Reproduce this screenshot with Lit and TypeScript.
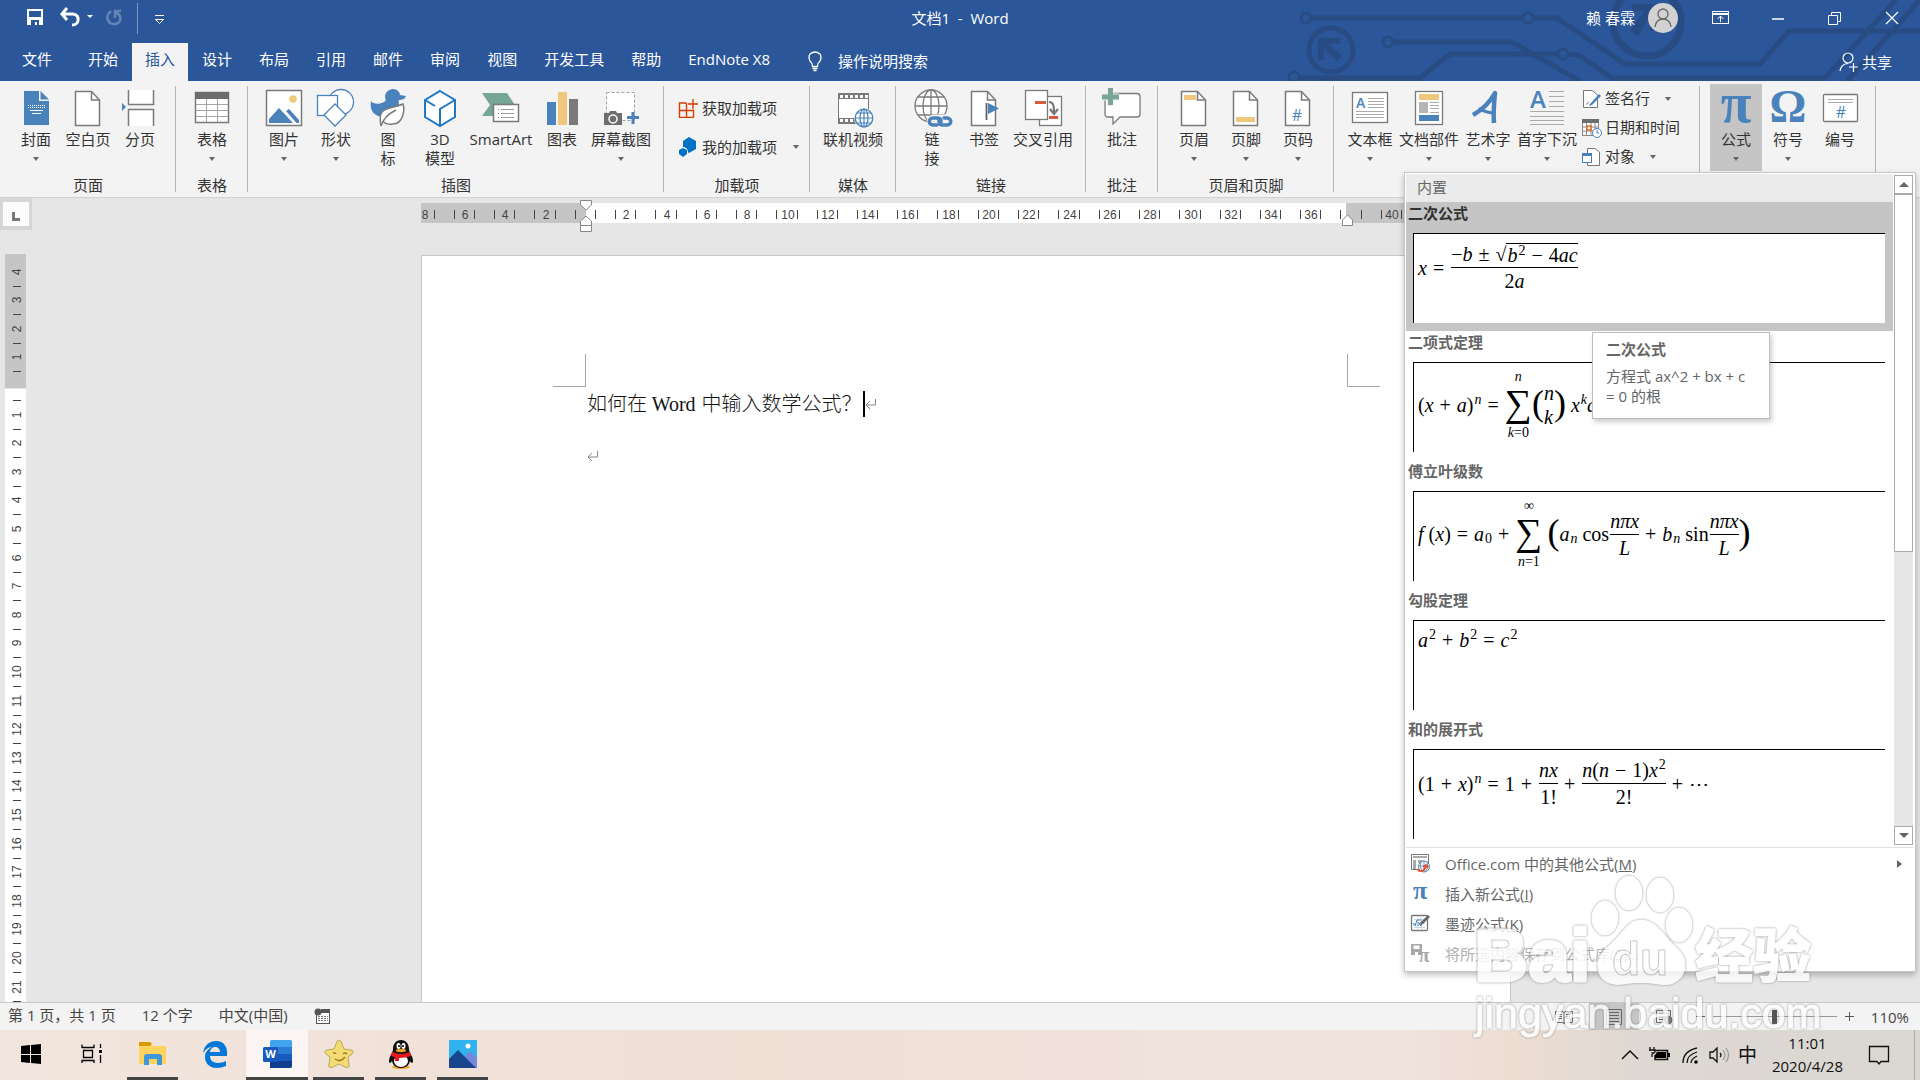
import { LitElement, html, svg, css, nothing, TemplateResult } from "lit";
import { customElement, state } from "lit/decorators.js";
import { classMap } from "lit/directives/class-map.js";

const BLUE = "#4a82bb";
const GREY = "#7a7a7a";

/* A page outline with a folded corner, shared by several ribbon icons. */
const sheet = svg`<path d="M7.500 3.500H23.500L31.500 12V37.500H7.500Z" fill="#fff" stroke="${GREY}" stroke-width="1.500"/><path d="M23.500 3.500V12H31.500" fill="none" stroke="${GREY}" stroke-width="1.500"/>`;

const big: Record<string, unknown> = {
  cover: svg`<path d="M8 3H23V13H33V37H8Z" fill="${BLUE}"/><path d="M24.500 3L33 11.500H24.500Z" fill="${BLUE}"/><path d="M12 17.500H29M12 19.500H29" stroke="#fff" stroke-dasharray="1 1"/><path d="M14 22.500H27M16 25.500H25" stroke="#fff"/>`,
  blank: sheet,
  break: svg`<path d="M8.500 2V16.500H33.500V2M8.500 38V21.500H33.500V38" fill="#fff" stroke="${GREY}" stroke-width="1.500"/><path d="M2 15L6 19L2 23Z" fill="${BLUE}"/>`,
  table: svg`<rect x="3.500" y="4.500" width="33" height="30" fill="#fff" stroke="${GREY}" stroke-width="1.500"/><rect x="3" y="4" width="34" height="7" fill="#6d6d6d"/><path d="M4 16.500H36M4 22.500H36M4 28.500H36M14.500 11V34M25.500 11V34" stroke="#a5a5a5"/>`,
  picture: svg`<rect x="2.500" y="2.500" width="35" height="35" fill="#fff" stroke="${GREY}" stroke-width="1.500"/><circle cx="29" cy="11" r="3.800" fill="#efc77d"/><path d="M5 35V31L15 20L29 35Z" fill="${BLUE}"/><path d="M22 23L25 21L35 32V35H32.500Z" fill="${BLUE}"/>`,
  shapes: svg`<circle cx="25" cy="14" r="12.500" fill="#fff" stroke="${BLUE}" stroke-width="1.300"/><rect x="1.500" y="7.500" width="20" height="20" fill="#fff" stroke="${BLUE}" stroke-width="1.300"/><path d="M19 16L30 27L19 38L8 27Z" fill="#fff" stroke="${BLUE}" stroke-width="1.300"/>`,
  icons: svg`<path d="M3 13C5 16 11 17 16 14C19 13 17 10 17 8C18 3 22 1 25 1C29 1 32 4 32 7L38 8C37 11 34 12 31 12C30 14 32 16 30 20C28 26 22 29 16 29C8 29 1 24 3 13Z" fill="${BLUE}"/><path d="M13 38C12 33 11 28 14 24C18 19 26 20 35 16C37 22 35 36 25 36C20 37 16 35 15 33" fill="#fff" stroke="${GREY}" stroke-width="1.500"/><path d="M13 38C15 31 20 26 28 22" fill="none" stroke="${GREY}" stroke-width="1.500"/>`,
  cube: svg`<path d="M20 3L35 12V29L20 38L5 29V12Z" fill="#fff" stroke="#1e78c2" stroke-width="2"/><path d="M5 12L15 18M20 37V21L35 12" fill="none" stroke="#1e78c2" stroke-width="2"/>`,
  smartart: svg`<path d="M1 5H26L34 17L26 28H1L9 17Z" fill="#77a696"/><rect x="12.500" y="16.500" width="25" height="17" fill="#fff" stroke="${GREY}" stroke-width="1.500"/><path d="M20 21.500H33M20 25.500H33M20 29.500H33" stroke="#9b9b9b"/><path d="M17 21.500H18M17 25.500H18M17 29.500H18" stroke="${GREY}"/>`,
  chart: svg`<rect x="5" y="14" width="9" height="23" fill="${BLUE}"/><rect x="16" y="4" width="9" height="33" fill="#efc77d"/><rect x="27" y="11" width="9" height="26" fill="${GREY}"/>`,
  screenshot: svg`<rect x="5.500" y="4.500" width="28" height="28" fill="#fff" stroke="#a0a0a0" stroke-dasharray="3 2"/><path d="M3 25H8L9 23H15L16 25H21V37H3Z" fill="#6d6d6d"/><circle cx="12" cy="31" r="4" fill="#6d6d6d" stroke="#fff" stroke-width="1.500"/><path d="M26 29.500H38M32 24V36" stroke="${BLUE}" stroke-width="3"/>`,
  video: svg`<rect x="5.500" y="5.500" width="30" height="30" fill="#fff" stroke="${GREY}"/><path d="M5 6H36V11H5ZM5 30H22V35H5Z" fill="${GREY}"/><path d="M7 8.500H36M7 32.500H20" stroke="#fff" stroke-width="3" stroke-dasharray="3 2"/><circle cx="31" cy="30" r="10" fill="#f3f3f3"/><circle cx="31" cy="30" r="8.800" fill="#fff" stroke="${BLUE}" stroke-width="1.300"/><ellipse cx="31" cy="30" rx="4" ry="8.800" fill="none" stroke="${BLUE}" stroke-width="1.300"/><path d="M31 21V39M22 30H40M24 25H38M24 35H38" stroke="${BLUE}" stroke-width="1.200"/>`,
  link: svg`<circle cx="19" cy="18" r="16" fill="#fff" stroke="${GREY}" stroke-width="1.300"/><ellipse cx="19" cy="18" rx="8" ry="16" fill="none" stroke="${GREY}" stroke-width="1.300"/><path d="M19 2V34M3 18H35M6 9H32M6 27H32" stroke="${GREY}" stroke-width="1.300"/><g fill="none" stroke="#f3f3f3" stroke-width="7"><rect x="18" y="30" width="13" height="8" rx="4"/><rect x="26" y="30" width="13" height="8" rx="4"/></g><g fill="none" stroke="${BLUE}" stroke-width="3.500" stroke-linecap="round"><path d="M25 37H21C16 37 16 30 21 30H25C29 30 30 34 28 36"/><path d="M32 30H35C40 30 40 37 35 37H31C27 37 26 33 28 31"/></g>`,
  bookmark: svg`${sheet}<path d="M22.500 15V32" stroke="#5f5f5f" stroke-width="1.800"/><path d="M24 15L35 20.500L24 26Z" fill="${BLUE}"/>`,
  crossref: svg`<rect x="16.500" y="8.500" width="22" height="29" fill="#fff" stroke="${GREY}" stroke-width="1.300"/><rect x="2.500" y="2.500" width="22" height="29" fill="#fff" stroke="${GREY}" stroke-width="1.300"/><path d="M12 14.500H23M26 29.500H35" stroke="#d65b3c" stroke-width="3"/><path d="M26 14C30 14 31 17 31 24M27 21L31 26L35 21" fill="none" stroke="#777" stroke-width="2.200"/>`,
  comment: svg`<path d="M5 5.500H35Q38 5.500 38 8.500V26Q38 29 35 29H18L11 36V29H6Q3 29 3 26V8.500Z" fill="#fff" stroke="${GREY}" stroke-width="1.300"/><path d="M-1 9H17M8 0V18" stroke="#f3f3f3" stroke-width="7"/><path d="M0 9H17M8.500 0V17" stroke="#77a696" stroke-width="5"/>`,
  header: svg`${sheet}<rect x="10" y="7" width="12" height="5" fill="#efc77d"/>`,
  footer: svg`${sheet}<rect x="10" y="29" width="19" height="5" fill="#efc77d"/>`,
  pageno: svg`${sheet}<text x="19" y="33" class="hash">#</text>`,
  textbox: svg`<rect x="2.500" y="4.500" width="35" height="30" fill="#fff" stroke="${GREY}" stroke-width="1.300"/><text x="6" y="20" class="lettr" font-size="14">A</text><path d="M18 10.500H34M18 13.500H34M18 16.500H34M18 19.500H34M6 23.500H34M6 26.500H34M6 29.500H34" stroke="#aaa"/>`,
  parts: svg`<rect x="6.500" y="3.500" width="27" height="33" fill="#fff" stroke="${GREY}" stroke-width="1.300"/><rect x="10" y="6" width="20" height="6" fill="#efc77d"/><rect x="10" y="14" width="9" height="11" fill="#b5b5b5"/><path d="M21 14.500H30M21 17.500H30M21 20.500H30M21 24.500H30" stroke="#aaa"/><rect x="10" y="27" width="20" height="6" fill="${BLUE}"/>`,
  wordart: svg`<g fill="none" stroke="${BLUE}" stroke-width="4.500"><path d="M5 27C14 22 22 14 27 5C26 15 25 25 26 35" stroke-linejoin="round"/><path d="M11 20C16 24 21 25 28 25" stroke-width="3"/></g>`,
  dropcap: svg`<text x="3" y="20" class="lettr" font-size="24">A</text><path d="M22 3.500H37M22 8.500H37M22 13.500H37M22 18.500H37M3 23.500H37M3 28.500H37M3 32.500H37M3 36.500H37" stroke="#aaa"/>`,
  pi: svg`<text x="20" y="34" class="sym" font-size="56">π</text>`,
  omega: svg`<text x="20" y="34" class="sym" font-size="46">Ω</text>`,
  number: svg`<rect x="3.500" y="6.500" width="34" height="27" rx="1" fill="#fff" stroke="${GREY}" stroke-width="1.300"/><path d="M8 11.500H33M8 14.500H33" stroke="#aaa"/><text x="21" y="30" class="hash">#</text>`,
};

interface Cmd { icon: string; label: string; second?: string; wide?: boolean; wider?: boolean; caret?: boolean; on?: boolean }
interface Group { name: string; cmds: Cmd[]; kind?: "addins" | "text" }

const TABS = ["文件", "开始", "插入", "设计", "布局", "引用", "邮件", "审阅", "视图", "开发工具", "帮助", "EndNote X8"];

const GROUPS: Group[] = [
  { name: "页面", cmds: [{ icon: "cover", label: "封面", caret: true }, { icon: "blank", label: "空白页" }, { icon: "break", label: "分页" }] },
  { name: "表格", cmds: [{ icon: "table", label: "表格", caret: true }] },
  { name: "插图", cmds: [
    { icon: "picture", label: "图片", caret: true }, { icon: "shapes", label: "形状", caret: true },
    { icon: "icons", label: "图", second: "标" }, { icon: "cube", label: "3D", second: "模型" },
    { icon: "smartart", label: "SmartArt", wider: true }, { icon: "chart", label: "图表" },
    { icon: "screenshot", label: "屏幕截图", wide: true, caret: true }] },
  { name: "加载项", cmds: [], kind: "addins" },
  { name: "媒体", cmds: [{ icon: "video", label: "联机视频", wide: true }] },
  { name: "链接", cmds: [{ icon: "link", label: "链", second: "接" }, { icon: "bookmark", label: "书签" }, { icon: "crossref", label: "交叉引用", wide: true }] },
  { name: "批注", cmds: [{ icon: "comment", label: "批注" }] },
  { name: "页眉和页脚", cmds: [{ icon: "header", label: "页眉", caret: true }, { icon: "footer", label: "页脚", caret: true }, { icon: "pageno", label: "页码", caret: true }] },
  { name: "文本", kind: "text", cmds: [
    { icon: "textbox", label: "文本框", caret: true }, { icon: "parts", label: "文档部件", wide: true, caret: true },
    { icon: "wordart", label: "艺术字", caret: true }, { icon: "dropcap", label: "首字下沉", wide: true, caret: true }] },
  { name: "符号", cmds: [{ icon: "pi", label: "公式", caret: true, on: true }, { icon: "omega", label: "符号", caret: true }, { icon: "number", label: "编号" }] },
];

/* ---------- ribbon ---------- */
@customElement("word-ribbon")
class WordRibbon extends LitElement {
  static styles = css`
    :host { display: block; background: #f3f3f3; border-bottom: 1px solid #d2d2d2; }
    button { font: inherit; color: inherit; background: none; border: 0; padding: 0; }
    .bar { display: flex; height: 112px; padding: 3px 0 1px; font-size: 15px; line-height: 19px; color: #333; }
    .group { display: flex; flex-direction: column; padding: 0 10px; position: relative; }
    .group::after { content: ""; position: absolute; right: 0; top: 2px; bottom: 4px; width: 1px; background: #b5b5b5; }
    .cmds { display: flex; height: 87px; }
    .name { margin-top: 5px; text-align: center; white-space: nowrap; }
    .cmd { width: 52px; display: flex; flex-direction: column; align-items: center; padding-top: 4px; white-space: nowrap; }
    .cmd.wide { width: 66px; }
    .cmd.wider { width: 70px; }
    .cmd.on { background: #c5c5c5; }
    .cmd svg { flex: none; width: 40px; height: 40px; margin-bottom: 2px; overflow: visible; }
    .caret { display: inline-block; width: 0; height: 0; border: 3px solid transparent; border-top: 4px solid #666; border-bottom: 0; }
    .second { height: 19px; display: flex; align-items: center; }
    .side { display: flex; flex-direction: column; }
    .addins { width: 126px; padding-top: 6px; gap: 3px; }
    .addins .row { height: 36px; padding-left: 4px; gap: 4px; }
    .textside { width: 110px; }
    .row { display: flex; align-items: center; height: 29px; gap: 3px; padding-left: 2px; white-space: nowrap; }
    .row .caret { margin-left: 12px; }
    .row svg { flex: none; width: 20px; height: 20px; }
    .hash { font: 16px "Open Sans", sans-serif; fill: #4a82bb; text-anchor: middle; }
    .lettr { font-family: "Open Sans", sans-serif; font-weight: 600; fill: #4a82bb; }
    .sym { font-family: "Liberation Serif", serif; font-weight: bold; fill: #4a82bb; text-anchor: middle; }
  `;

  private command(c: Cmd) {
    return html`<button class=${classMap({ cmd: true, wide: !!c.wide, wider: !!c.wider, on: !!c.on })}>
      <svg viewBox="0 0 40 40">${big[c.icon]}</svg>
      <span>${c.label}</span>
      <span class="second">${c.second ?? (c.caret ? html`<i class="caret"></i>` : nothing)}</span>
    </button>`;
  }

  private addins() {
    return html`<div class="side addins">
      <button class="row"><svg viewBox="0 0 20 20"><path d="M8.500 5H1.500V19.500H15.500V12.500H1.500M8.500 5V19.500M15 1V11M10 6H20" fill="none" stroke="#d83b01" stroke-width="1.400"/></svg><span>获取加载项</span></button>
      <button class="row"><svg viewBox="0 0 20 20"><path d="M11 0L18 4V12L11 16L5 12V4Z" fill="#0072c6"/><circle cx="5" cy="15" r="5" fill="#f3f3f3"/><path d="M5 11L9 13V17L5 20L1 17V13Z" fill="#0072c6"/></svg><span>我的加载项</span><i class="caret"></i></button>
    </div>`;
  }

  private textSide() {
    return html`<div class="side textside">
      <button class="row"><svg viewBox="0 0 20 20"><path d="M1.500 1.500H10L15.500 6V18.500H1.500Z" fill="#fff" stroke="#777"/><path d="M8 15L17 5L19 7L10 16L7 17Z" fill="#4a82bb"/><path d="M4 15.500L7 13" stroke="#777"/></svg><span>签名行</span><i class="caret"></i></button>
      <button class="row"><svg viewBox="0 0 20 20"><rect x="0.500" y="1.500" width="16" height="16" fill="#fff" stroke="#888"/><rect y="1" width="17" height="4" fill="#6d6d6d"/><path d="M1 9H16M1 13H16M4.500 5V17M9 5V17M13 5V17" stroke="#888"/><rect x="5" y="8" width="4" height="4" fill="#fff" stroke="#e06c1b" stroke-width="1.500"/><circle cx="15" cy="15" r="4.500" fill="#fff" stroke="#4a82bb"/><path d="M15 12V15H17" fill="none" stroke="#4a82bb"/></svg><span>日期和时间</span></button>
      <button class="row"><svg viewBox="0 0 20 20"><path d="M5.500 18.500V1.500H13L17.500 5V18.500Z" fill="#fff" stroke="#777"/><rect x="0.500" y="6.500" width="9" height="9" fill="#fff" stroke="#4a82bb"/><rect y="6" width="10" height="3" fill="#4a82bb"/></svg><span>对象</span><i class="caret"></i></button>
    </div>`;
  }

  render() {
    return html`<div class="bar">${GROUPS.map((g) => html`<div class="group">
      <div class="cmds">${g.cmds.map((c) => this.command(c))}${g.kind === "addins" ? this.addins() : g.kind === "text" ? this.textSide() : nothing}</div>
      <div class="name">${g.name}</div>
    </div>`)}</div>`;
  }
}

/* ---------- equations ---------- */
const v = (s: string) => html`<i>${s}</i>`;
const op = (s: string) => html`<span class="op">${s}</span>`;
const frac = (a: unknown, b: unknown) => html`<span class="frac"><span class="num">${a}</span><span class="den">${b}</span></span>`;
const sum = (top: unknown, bottom: unknown) => html`<span class="sum"><span class="lim">${top}</span><span class="sigma">∑</span><span class="lim">${bottom}</span></span>`;

const EQUATIONS: { name: string; body: TemplateResult }[] = [
  { name: "二次公式", body: html`${v("x")}${op("=")}${frac(html`<span>−${v("b")}</span>${op("±")}<span>√</span><span class="root">${v("b")}<sup>2</sup>${op("−")}4${v("ac")}</span>`, html`2${v("a")}`)}` },
  { name: "二项式定理", body: html`<span>(</span>${v("x")}${op("+")}${v("a")}<span>)</span><sup>${v("n")}</sup>${op("=")}${sum(v("n"), html`${v("k")}=0`)}<span class="tall">(</span><span class="stack">${v("n")}${v("k")}</span><span class="tall">)</span><span class="gap"></span>${v("x")}<sup>${v("k")}</sup>${v("a")}<sup>${v("n−k")}</sup>` },
  { name: "傅立叶级数", body: html`${v("f")}<span class="gap"></span><span>(</span>${v("x")}<span>)</span>${op("=")}${v("a")}<sub>0</sub>${op("+")}${sum("∞", html`${v("n")}=1`)}<span class="gap"></span><span class="tall">(</span>${v("a")}<sub>${v("n")}</sub><span class="gap"></span><span>cos</span>${frac(v("nπx"), v("L"))}${op("+")}${v("b")}<sub>${v("n")}</sub><span class="gap"></span><span>sin</span>${frac(v("nπx"), v("L"))}<span class="tall">)</span>` },
  { name: "勾股定理", body: html`${v("a")}<sup>2</sup>${op("+")}${v("b")}<sup>2</sup>${op("=")}${v("c")}<sup>2</sup>` },
  { name: "和的展开式", body: html`<span>(1</span>${op("+")}${v("x")}<span>)</span><sup>${v("n")}</sup>${op("=")}<span>1</span>${op("+")}${frac(v("nx"), "1!")}${op("+")}${frac(html`${v("n")}<span>(</span>${v("n")}${op("−")}1)${v("x")}<sup>2</sup>`, "2!")}${op("+")}<span>⋯</span>` },
];

@customElement("equation-gallery")
class EquationGallery extends LitElement {
  @state() private active = 0;

  static styles = css`
    :host { display: block; background: #fff; border: 1px solid #c6c6c6; box-shadow: 0 3px 6px rgba(0, 0, 0, 0.25); font-size: 15px; line-height: 20px; color: #666; padding: 1px; box-sizing: border-box; }
    button { font: inherit; color: inherit; background: none; border: 0; padding: 0; text-align: left; }
    .top { display: flex; }
    .list { flex: 1; min-width: 0; }
    .head { background: #ebebeb; height: 28px; line-height: 26px; padding-left: 11px; }
    .item { display: block; width: 100%; height: 129px; padding: 1px 8px 8px 7px; box-sizing: border-box; }
    .item.on { background: #c5c5c5; color: #333; }
    .title { display: block; height: 30px; font-weight: bold; margin-left: -5px; }
    .box { display: flex; align-items: flex-start; height: 90px; box-sizing: border-box; background: #fff; border-left: 1px solid #000; border-top: 1px solid #000; padding: 7px 0 0 4px; overflow: hidden; }
    .eq { display: flex; align-items: center; color: #000; font: 20px/24px "Liberation Serif", serif; white-space: nowrap; }
    .op { margin: 0 6px; }
    .gap { width: 5px; }
    .frac { display: flex; flex-direction: column; align-items: stretch; margin-left: 1px; }
    .num, .den { display: flex; justify-content: center; align-items: center; height: 26px; }
    .num { border-bottom: 1px solid #000; }
    .root { display: flex; border-top: 1px solid #000; height: 22px; line-height: 22px; padding-left: 1px; }
    sup, sub { font-size: 14px; line-height: 14px; vertical-align: baseline; margin-left: 1px; }
    sup { padding-bottom: 10px; }
    sub { padding-top: 10px; }
    .sum { display: flex; flex-direction: column; align-items: center; }
    .lim { font-size: 14px; line-height: 14px; height: 14px; }
    .sigma { font: 38px/38px "Liberation Serif", serif; height: 42px; }
    .tall { font-size: 36px; line-height: 40px; height: 44px; font-weight: normal; }
    .stack { display: flex; flex-direction: column; }
    .scroll { width: 21px; display: flex; flex-direction: column; padding: 1px 1px 2px; box-sizing: border-box; }
    .arrow { height: 19px; border: 1px solid #ababab; background: #fff; display: flex; align-items: center; justify-content: center; box-sizing: border-box; }
    .track { flex: 1; background: #e6e6e6; }
    .thumb { height: 358px; box-sizing: border-box; border: 1px solid #ababab; background: #fff; }
    .up, .down, .right { width: 0; height: 0; border: 5px solid transparent; }
    .up { border-bottom-color: #666; border-top: 0; }
    .down { border-top-color: #666; border-bottom: 0; }
    .right { border-left-color: #666; border-right: 0; margin: 0 12px 0 auto; border-left-width: 5px; border-top-width: 4px; border-bottom-width: 4px; }
    .menu { border-top: 1px solid #e1e1e1; padding: 1px 0; display: flex; flex-direction: column; }
    .entry { display: flex; align-items: center; height: 30px; padding-left: 5px; gap: 14px; }
    .entry svg { width: 20px; height: 20px; flex: none; overflow: visible; }
    .entry.off { color: #b0b0b0; }
    .pi { font: bold 26px "Liberation Serif", serif; fill: #4a82bb; text-anchor: middle; }
    .pi.small { font-size: 20px; fill: #a8a8a8; }
    .tip { position: absolute; left: 187px; top: 159px; width: 178px; height: 87px; box-sizing: border-box; background: #fff; border: 1px solid #bebebe; box-shadow: 2px 3px 5px rgba(0, 0, 0, 0.2); padding: 6px 10px 0 13px; }
    .tip b { display: block; margin-bottom: 7px; }
  `;

  render() {
    return html`
      <div class="top">
        <div class="list">
          <div class="head">内置</div>
          ${EQUATIONS.map((e, i) => html`<button class=${classMap({ item: true, on: i === this.active })} @click=${() => (this.active = i)}>
            <span class="title">${e.name}</span>
            <span class="box"><span class="eq">${e.body}</span></span>
          </button>`)}
        </div>
        <div class="scroll">
          <button class="arrow" aria-label="向上滚动"><i class="up"></i></button>
          <div class="track"><div class="thumb"></div></div>
          <button class="arrow" aria-label="向下滚动"><i class="down"></i></button>
        </div>
      </div>
      <div class="menu">
        <button class="entry"><svg viewBox="0 0 20 20"><path d="M0.500 0.500H17.500V15.500H0.500Z" fill="#fff" stroke="#777"/><path d="M2 3H16" stroke="#aaa" stroke-width="2"/><path d="M2 6H5V15H2ZM7 6H11V9H7Z" fill="#aaa"/><circle cx="13" cy="12.500" r="5.500" fill="#fff" stroke="#4a82bb"/><path d="M8 12H18M13 7V18M10 8Q8 13 11 17M16 8Q18 13 15 17" fill="none" stroke="#4a82bb" stroke-width="0.800"/><path d="M6 15C9 19 14 17 15 12M12 13L15 11L17 14" fill="none" stroke="#e8502a" stroke-width="1.700"/></svg><span>Office.com 中的其他公式(<u>M</u>)</span><i class="right"></i></button>
        <button class="entry"><svg viewBox="0 0 20 20"><text x="9" y="15" class="pi">π</text></svg><span>插入新公式(<u>I</u>)</span></button>
        <button class="entry"><svg viewBox="0 0 20 20"><rect x="0.500" y="1.500" width="16" height="15" rx="1" fill="#fff" stroke="#777" stroke-width="1.300"/><path d="M3 5.500H14M3 9.500H14M3 13.500H14M6.500 4V15M10.500 4V15" stroke="#c4d8ea"/><path d="M2 9L4 12L6 6H10M7 8L10 12M10 8L7 12" fill="none" stroke="#4a82bb"/><path d="M9 12L10 8L17 1L19 3L12 10Z" fill="#666"/></svg><span>墨迹公式(<u>K</u>)</span></button>
        <button class="entry off" disabled><svg viewBox="0 0 20 20"><path d="M0 0H11V11H7V8H4V11H0ZM2.500 1.500V5H8.500V1.500Z" fill="#a8a8a8" fill-rule="evenodd"/><text x="13" y="18" class="pi small">π</text></svg><span>将所选内容保存到公式库(<u>S</u>)...</span></button>
      </div>
      <div class="tip" role="tooltip"><b>二次公式</b>方程式 ax^2 + bx + c<br>= 0 的根</div>
    `;
  }
}

/* ---------- application shell ---------- */
const CM = 20.15;

const task: Record<string, unknown> = {
  开始: svg`<path d="M5 7L14 6V15H5ZM15 6L25 5V15H15ZM5 16H14V24L5 23ZM15 16H25V25L15 24Z" fill="#000"/>`,
  任务视图: svg`<path d="M5 5.500V9M17 5.500V9M5 8.500H17M6.500 11.500H15.500V18.500H6.500ZM5 24V21.500H17V24M23.500 5V9M23.500 16V24" fill="none" stroke="#000" stroke-width="1.300"/><rect x="22" y="11" width="3" height="3"/>`,
  文件资源管理器: svg`<path d="M1 4H12L14 7H28V25H1Z" fill="#ffd45e"/><path d="M1 3H12L14 5L12 7H1Z" fill="#d99a00"/><path d="M6 26V18Q6 15 9 15H21Q24 15 24 18V26H19V20H11V26Z" fill="#3f97dc"/>`,
  Edge: svg`<path d="M3 14C4 6 10 2 16 2C24 2 28 8 27 17H10C10 22 14 24 18 24C21 24 24 23 26 22V27C23 28 20 29 17 29C9 29 5 24 5 18C5 13 8 10 12 8C8 8 5 11 3 14ZM10 13H20C20 10 18 8 15 8C13 8 10 10 10 13Z" fill="#0078d7" fill-rule="evenodd"/>`,
  Word: svg`<rect x="8" y="1" width="22" height="28" rx="1.500" fill="#41a5ee"/><path d="M8 8H30V15H8Z" fill="#2b7cd3"/><path d="M8 15H30V22H8Z" fill="#185abd"/><path d="M8 22H30V27Q30 29 28 29H8Z" fill="#103f91"/><rect x="1" y="8" width="15" height="15" rx="1.500" fill="#185abd"/><text x="8.500" y="19" class="w">W</text>`,
  收藏: svg`<path d="M15 1Q17 1 18 5L20 10L27 11Q31 12 28 15L24 18L25 25Q26 30 21 28L15 25L9 28Q4 30 5 25L6 18L2 15Q-1 12 3 11L10 10L12 5Q13 1 15 1Z" fill="#f3dc72" stroke="#b9a760"/><path d="M9 14Q11 13 12 15M19 15Q21 13 23 15M11 20Q16 24 21 18" fill="none" stroke="#a87d28" stroke-width="1.500"/>`,
  QQ: svg`<ellipse cx="15" cy="28" rx="9" ry="2" fill="#f5a623"/><path d="M15 1C20 1 23 5 23 10C23 14 27 17 27 22C27 25 25 24 24 22C23 27 19 29 15 29C11 29 7 27 6 22C5 24 3 25 3 22C3 17 7 14 7 10C7 5 10 1 15 1Z" fill="#111"/><ellipse cx="15" cy="22" rx="7" ry="6" fill="#fff"/><ellipse cx="12.500" cy="7" rx="2" ry="3" fill="#fff"/><ellipse cx="17.500" cy="7" rx="2" ry="3" fill="#fff"/><circle cx="13" cy="7" r="1"/><circle cx="17" cy="7" r="1"/><ellipse cx="15" cy="11.500" rx="5" ry="1.700" fill="#f5a623"/><path d="M6 13Q15 17 24 13L25 17Q20 19 13 19V22H9V18L5 17Z" fill="#e8191c"/>`,
  照片: svg`<rect x="1" y="1" width="28" height="28" rx="1" fill="#2fb2ee"/><path d="M14 20L22 12L29 19V29H14Z" fill="#7587dd"/><path d="M1 20L10 11L28 29H1Z" fill="#18458c"/><circle cx="20" cy="7" r="2.500" fill="#fff"/>`,
};

@customElement("app-root")
class AppRoot extends LitElement {
  static styles = css`
    :host { display: flex; flex-direction: column; min-height: 100vh; position: relative; overflow: hidden; font-family: "Open Sans", "Noto Sans CJK SC", sans-serif; font-size: 15px; line-height: 20px; background: #e6e6e6; }
    button { font: inherit; color: inherit; background: none; border: 0; padding: 0; }
    header { background: #2b579a; color: #fff; position: relative; height: 81px; display: flex; flex-direction: column; }
    .circuit { position: absolute; right: 0; top: 0; width: 640px; height: 81px; }
    .titlebar, .tabs { position: relative; display: flex; align-items: center; }
    .titlebar { height: 36px; justify-content: space-between; }
    .quick, .window { flex: 1; display: flex; align-items: center; }
    .quick svg { height: 31px; width: 150px; margin-left: 24px; }
    .doc { white-space: pre; }
    .window { justify-content: flex-end; }
    .window .who { margin-right: 13px; }
    .window button { width: 57px; height: 36px; display: flex; align-items: center; justify-content: center; }
    .window .first { margin-left: 14px; }
    .window svg { width: 18px; height: 18px; }
    .window svg.avatar { width: 30px; height: 30px; }
    .tabs { height: 38px; margin-top: 7px; gap: 1px; }
    .tab { height: 38px; padding: 0 13px 6px; white-space: nowrap; }
    .tab:first-child { padding: 0 22px 6px; }
    .tab.on { background: #f3f3f3; color: #2b579a; }
    .tell { display: flex; align-items: center; gap: 15px; margin-left: 23px; padding-bottom: 2px; }
    .tell svg { width: 16px; height: 21px; }
    .share { display: flex; align-items: center; gap: 3px; margin: 0 28px 0 auto; }
    .share svg { width: 20px; height: 20px; }

    .work { flex: 1; display: flex; min-height: 0; }
    .leftbar { width: 30px; flex: none; }
    .corner { display: flex; align-items: center; justify-content: center; width: 26px; height: 24px; background: #fcfcfc; border: 3px solid #d6d6d6; border-width: 4px 3px 4px 3px; box-sizing: content-box; }
    .corner i { width: 5px; height: 6px; border-left: 3px solid #777; border-bottom: 3px solid #777; margin: 4px 0 0; }
    .vruler { display: block; width: 30px; height: 748px; margin-top: 24px; }
    .desk { flex: 1; display: flex; flex-direction: column; align-items: center; margin-right: 18px; }
    .hruler { display: block; width: 1090px; height: 57px; overflow: visible; }
    .page { position: relative; flex: 1; width: 1090px; box-sizing: border-box; background: #fff; border: 1px solid #c6c6c6; border-bottom: 0; padding: 132px 163px 0 165px; font-family: "Liberation Serif", "Noto Sans CJK SC", serif; font-weight: 300; font-size: 20px; line-height: 32px; color: #111; }
    .page p { margin: 0 0 20px; height: 32px; display: flex; align-items: center; white-space: pre; }
    .latin { font-weight: 400; margin: 0 1px 0 0; }
    .cursor { width: 2px; height: 26px; background: #000; margin-left: 1px; }
    .para { width: 12px; height: 12px; }
    .mark { position: absolute; top: 98px; width: 32px; height: 32px; border: 0 solid #a6a6a6; border-bottom-width: 1px; }
    .mark.l { left: 131px; border-right-width: 1px; }
    .mark.r { right: 130px; border-left-width: 1px; }
    .rt { font: 12px "Liberation Sans", sans-serif; fill: #444; text-anchor: middle; }

    .status { height: 27px; background: #f3f3f3; border-top: 1px solid #c8c8c8; display: flex; align-items: center; color: #444; padding: 0 11px 0 8px; gap: 26px; white-space: nowrap; line-height: 20px; }
    .status > span { padding-bottom: 4px; }
    .status svg { width: 18px; height: 18px; }
    .views { margin-left: auto; display: flex; align-items: center; height: 27px; }
    .views button { width: 50px; height: 27px; display: flex; align-items: center; justify-content: center; }
    .views .on { background: #c5c5c5; }
    .zoom { display: flex; align-items: center; gap: 7px; margin-left: -20px; font-size: 15px; }
    .zoom svg { width: 11px; height: 11px; display: block; }
    .zoom input { appearance: none; width: 124px; height: 20px; margin: 0; background: linear-gradient(#999, #999) center / 100% 1px no-repeat; }
    .zoom input::-webkit-slider-thumb { appearance: none; width: 5px; height: 14px; background: #555; }
    .pct { margin-left: 9px; }

    .taskbar { height: 50px; display: flex; background: linear-gradient(90deg, #f2e5dd 0, #efe0d6 40%, #f1e4df 72%, #ecddd2 79%, #ddd8d2 86%, #dad6d1); }
    .tasks { display: flex; }
    .task { width: 62px; height: 50px; display: flex; align-items: center; justify-content: center; box-sizing: border-box; border-bottom: 3px solid transparent; background-clip: padding-box; position: relative; }
    .task.slim { width: 61px; }
    .task svg { width: 30px; height: 30px; }
    .task.run::after { content: ""; position: absolute; left: 5px; right: 6px; bottom: -3px; height: 3px; background: #444; }
    .task.now { background-color: #faf5f2; }
    .task.now::after { left: 0; right: 0; }
    .w { font: bold 11px "Open Sans", sans-serif; fill: #fff; text-anchor: middle; }
    .tray { margin-left: auto; display: flex; align-items: center; color: #111; }
    .icons { width: 109px; height: 24px; margin-right: 8px; }
    .ime { font-size: 19px; }
    .clock { display: flex; flex-direction: column; align-items: center; margin-left: 15px; line-height: 23px; }
    .note { width: 22px; height: 22px; margin: 0 24px 0 25px; }
    .edge { width: 1px; align-self: stretch; background: #b0aba6; margin-right: 5px; }

    equation-gallery { position: absolute; right: 4px; top: 172px; width: 512px; }
    .watermark { position: absolute; right: 95px; top: 870px; width: 360px; height: 180px; pointer-events: none; opacity: 0.8; filter: drop-shadow(0 0 1px #777); }
    .watermark text { font-family: "Liberation Sans", "Noto Sans CJK SC", sans-serif; font-weight: bold; }
    .watermark .du { font-size: 46px; stroke: #bdbdbd; stroke-width: 1px; }
    .watermark .url { font-weight: normal; stroke-width: 1px; }
  `;

  private circuit() {
    return html`<svg class="circuit" viewBox="0 0 640 81"><g fill="none" stroke="#274b82" stroke-width="5">
      <circle cx="26" cy="18" r="5" stroke-width="3"/><circle cx="248" cy="18" r="5" stroke-width="3"/><path d="M32 18H242M254 18H277L345 64H480L509 31H640"/>
      <circle cx="108" cy="42" r="5" stroke-width="3"/><path d="M114 42H232L300 81"/>
      <circle cx="14" cy="77" r="5" stroke-width="3"/><path d="M20 78H140L170 54H277M289 54Q300 54 306 60L332 78H545L616 0M567 81L640 0"/><circle cx="283" cy="54" r="5" stroke-width="3"/>
      <circle cx="51" cy="50" r="22"/><circle cx="367" cy="22" r="34" stroke-width="7"/></g>
      <path d="M38 38H60V44H49L62 56L57 61L44 49V60H38ZM352 4H378V31H370V16L358 36L350 31L364 11H352Z" fill="#274b82"/></svg>`;
  }

  private hruler() {
    const zero = 165;
    const marks: unknown[] = [];
    for (let n = -8; n <= 40; n += 2) {
      const x = Math.round(zero + n * CM);
      if (n !== 0 && n !== 38) marks.push(svg`<text class="rt" x=${Math.max(x, 3)} y="21">${Math.abs(n)}</text>`);
      marks.push(svg`<path d="M${x + 9}.5 12V21M${x + 29}.5 12V21" stroke="#444"/>`);
    }
    return html`<svg class="hruler" viewBox="0 0 1090 57">
      <rect x="0" y="5" width="1090" height="20" fill="#c5c5c5"/><rect x="165" y="5" width="760" height="20" fill="#fff"/>
      ${marks}
      <path d="M159.500 2.500H170.500V7L165 12L159.500 7ZM159.500 31.500V23L165 18L170.500 23V33.500H159.500V27.500H170.500M921.500 27.500V22L926.500 17L931.500 22V27.500Z" fill="#fff" stroke="#888"/>
    </svg>`;
  }

  private vruler() {
    const step = 28.6;
    const zero = 132;
    const marks: unknown[] = [];
    for (let n = -4; n <= 21; n++) {
      const y = Math.round(zero + n * step);
      if (n !== 0) marks.push(svg`<text class="rt" transform="translate(21 ${y}) rotate(-90)">${Math.abs(n)}</text>`);
      marks.push(svg`<path d="M13 ${y + 14}.5H21" stroke="#444"/>`);
    }
    return html`<svg class="vruler" viewBox="0 0 30 748"><rect x="5" width="21" height="134" fill="#c5c5c5"/><rect x="5" y="135" width="21" height="613" fill="#fff"/>${marks}</svg>`;
  }

  private pilcrow() {
    return html`<svg class="para" viewBox="0 0 12 12"><path d="M10.500 1V7H1M5 3L1 7L5 11" fill="none" stroke="#888"/></svg>`;
  }

  private watermark() {
    return html`<svg class="watermark" viewBox="0 0 360 180" fill="#fff" stroke="#fff" stroke-width="3" stroke-linejoin="round">
      <text x="9" y="111" font-size="75">Bai</text>
      <g stroke-width="1"><ellipse cx="140" cy="48" rx="13" ry="17"/><ellipse cx="164" cy="23" rx="13" ry="17"/><ellipse cx="195" cy="25" rx="13" ry="17"/><ellipse cx="214" cy="55" rx="13" ry="17"/>
      <path d="M176 50C164 50 158 62 150 70C140 80 132 84 133 98C134 110 144 116 158 114C170 112 182 112 194 114C210 117 220 108 220 94C220 82 208 76 202 68C196 60 188 50 176 50Z"/></g>
      <text x="147" y="105" class="du">du</text>
      <text x="230" y="107" font-size="58" stroke-width="2">经验</text>
      <text class="url" x="10" y="158" font-size="43">jingyan.baidu.com</text>
    </svg>`;
  }

  render() {
    return html`
      <header>
        ${this.circuit()}
        <div class="titlebar">
          <div class="quick">
            <svg viewBox="0 0 150 31" aria-label="快速访问工具栏"><path d="M3 6H19V22H3ZM5 8V14H17V8ZM7 17V22H15V17Z" fill="#fff" fill-rule="evenodd"/><path d="M11 19H13V22H11Z" fill="#fff"/><path d="M43 5L38 11L43 17M38 11H49Q55 12 54 18Q53 22 48 22" fill="none" stroke="#fff" stroke-width="3"/><path d="M63 12H69L66 15Z" fill="#fff"/><path d="M97 8H91V15M91 9Q98 12 96 18Q92 23 86 20Q80 14 87 8" fill="none" stroke="#6484b6" stroke-width="2.500"/><path d="M113.500 0V31" stroke="#7d98c3"/><path d="M131 12.500H140M131.500 16.500H139.500L135.500 20.500Z" fill="none" stroke="#fff"/></svg>
          </div>
          <div class="doc">文档1  -  Word</div>
          <div class="window">
            <span class="who">赖 春霖</span>
            <svg class="avatar" viewBox="0 0 30 30"><circle cx="15" cy="15" r="15" fill="#d2d2d2"/><circle cx="15" cy="11" r="5" fill="none" stroke="#666" stroke-width="1.300"/><path d="M7 24Q8 16 15 16Q22 16 23 24" fill="none" stroke="#666" stroke-width="1.300"/></svg>
            <button class="first" aria-label="功能区显示选项"><svg viewBox="0 0 18 18" fill="none" stroke="#fff"><rect x="0.500" y="2.500" width="16" height="12"/><path d="M0 5H17" stroke-width="2"/><path d="M8.500 13V7M5.500 10L8.500 7L11.500 10"/></svg></button>
            <button aria-label="最小化"><svg viewBox="0 0 18 18"><path d="M3 10H15" stroke="#fff" stroke-width="1.500"/></svg></button>
            <button aria-label="还原"><svg viewBox="0 0 18 18" fill="none" stroke="#fff"><path d="M2.500 6.500H11.500V15.500H2.500ZM5.500 6V3.500H14.500V12.500H12"/></svg></button>
            <button aria-label="关闭"><svg viewBox="0 0 18 18"><path d="M3 3L15 15M15 3L3 15" stroke="#fff" stroke-width="1.200"/></svg></button>
          </div>
        </div>
        <nav class="tabs">
          ${TABS.map((t) => html`<button class=${classMap({ tab: true, on: t === "插入" })}>${t}</button>`)}
          <button class="tell"><svg viewBox="0 0 16 21" fill="none" stroke="#fff" stroke-width="1.300"><path d="M5.500 15.500Q5.500 12 3 10Q1 6 3 3Q8 -1 13 3Q15 6 13 10Q10.500 12 10.500 15.500ZM5.500 17.500H10.500M6.500 19.500H9.500"/></svg>操作说明搜索</button>
          <button class="share"><svg viewBox="0 0 20 20" fill="none" stroke="#fff" stroke-width="1.200"><circle cx="9" cy="6" r="5"/><path d="M1 19Q2 12 9 11.500M10 15H19M14.500 11V20"/></svg>共享</button>
        </nav>
      </header>
      <word-ribbon></word-ribbon>
      <main class="work">
        <div class="leftbar"><div class="corner"><i></i></div>${this.vruler()}</div>
        <div class="desk">
          ${this.hruler()}
          <article class="page">
            <i class="mark l"></i><i class="mark r"></i>
            <p>如何在<span class="latin"> Word </span>中输入数学公式？<i class="cursor"></i>${this.pilcrow()}</p>
            <p>${this.pilcrow()}</p>
          </article>
        </div>
      </main>
      <footer class="status">
        <span>第 1 页，共 1 页</span><span>12 个字</span><span>中文(中国)</span>
        <svg viewBox="0 0 18 18"><rect x="2.500" y="2.500" width="13" height="13" fill="#fff" stroke="#555"/><path d="M7 1H16V5H7Z" fill="#555"/><circle cx="4" cy="4" r="3.500" fill="#555"/><path d="M4 8.500H14M4 10.500H14M4 12.500H14" stroke="#777" stroke-dasharray="2 1"/></svg>
        <div class="views">
          <button aria-label="阅读视图"><svg viewBox="0 0 18 18" fill="none" stroke="#666"><path d="M0.500 3.500H7Q9 3.500 9 5Q9 3.500 11 3.500H17.500V14.500H11Q9 14.500 9 16Q9 14.500 7 14.500H0.500ZM9 5V15M3 6.500H7M3 8.500H7M3 10.500H7M11 6.500H15M11 8.500H15M11 10.500H15"/></svg></button>
          <button class="on" aria-label="页面视图"><svg viewBox="0 0 18 18" fill="none" stroke="#666"><path d="M1.500 1.500H16.500V16.500H1.500ZM4 4.500H14M4 7.500H14M4 10.500H14M4 13.500H14"/></svg></button>
          <button aria-label="Web 版式视图"><svg viewBox="0 0 18 18" fill="none" stroke="#666"><path d="M9 14.500H1.500V2.500H15.500V8M4 5.500H13M4 8.500H10M4 11.500H8"/><circle cx="13" cy="12" r="4" fill="#777"/></svg></button>
        </div>
        <div class="zoom">
          <button aria-label="缩小"><svg viewBox="0 0 11 11"><path d="M1 5.500H10" stroke="#555"/></svg></button>
          <input type="range" min="10" max="210" .value=${"110"} aria-label="缩放">
          <button aria-label="放大"><svg viewBox="0 0 11 11"><path d="M1 5.500H10M5.500 1V10" stroke="#555"/></svg></button>
          <span class="pct">110%</span>
        </div>
      </footer>
      <footer class="taskbar">
        <div class="tasks">${Object.keys(task).map((k, i) => html`<button aria-label=${k} class=${classMap({ task: true, slim: i < 2, run: [2, 4, 5, 6, 7].includes(i), now: i === 4 })}><svg viewBox="0 0 30 30">${task[k]}</svg></button>`)}</div>
        <div class="tray">
          <svg class="icons" viewBox="0 0 109 24"><g fill="none" stroke="#111" stroke-width="1.500"><path d="M1 16L9 8L17 16"/><path d="M34 7.500H46.500V16.500H34V12"/><path d="M29 4V8M33 4V8M28 7H34V9Q31 12 31 9M31 11V14" stroke-width="1.300"/><path d="M62 20Q62 8 76 5M66 20Q66 12 76 9M70 20Q70 16 76 13" stroke-width="1.300"/><path d="M89 9H92L96 5V19L92 15H89ZM99 10Q101 12 99 14" stroke-width="1.300"/><path d="M102 7Q106 12 102 17M105 5Q110 12 105 19" stroke="#999" stroke-width="1.200"/></g><path d="M36 9H45V15H34V12ZM47 10H49V14H47Z"/><circle cx="75" cy="19" r="1.800"/></svg>
          <span class="ime">中</span>
          <div class="clock"><span>11:01</span><span>2020/4/28</span></div>
          <svg class="note" viewBox="0 0 22 22"><path d="M1.500 2.500H20.500V17.500H13L11 20L9 17.500H1.500Z" fill="none" stroke="#111" stroke-width="1.300"/></svg>
          <i class="edge"></i>
        </div>
      </footer>
      <equation-gallery></equation-gallery>
      ${this.watermark()}
    `;
  }
}
